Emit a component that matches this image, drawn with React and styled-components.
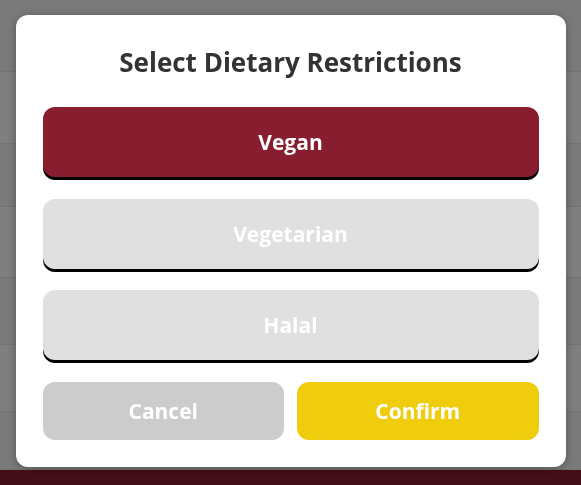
import React, { useState } from 'react';
import styled, { createGlobalStyle } from 'styled-components';

const options = ['Vegan', 'Vegetarian', 'Halal'];
const rows = [72, 72, 63, 71, 67, 67, 58];

const App = () => {
  const [picked, setPicked] = useState(['Vegan']);

  const toggle = (name) =>
    setPicked((p) => (p.includes(name) ? p.filter((n) => n !== name) : [...p, name]));

  return (
    <>
      <GlobalStyle />
      <Page>
        <List>
          {rows.map((h, i) => (
            <Row key={i} $h={h} $alt={i % 2 === 0} />
          ))}
        </List>
        <Footer />
      </Page>
      <Overlay>
        <Modal>
          <Title>Select Dietary Restrictions</Title>
          <Options>
            {options.map((name) => (
              <Option key={name} $active={picked.includes(name)} onClick={() => toggle(name)}>
                {name}
              </Option>
            ))}
          </Options>
          <Actions>
            <ActionButton $kind='cancel'>Cancel</ActionButton>
            <ActionButton $kind='confirm'>Confirm</ActionButton>
          </Actions>
        </Modal>
      </Overlay>
    </>
  );
};

const GlobalStyle = createGlobalStyle`
  * {
    box-sizing: border-box;
  }
  html, body {
    margin: 0;
    padding: 0;
    height: 100%;
    overflow: hidden;
    font-family: "Open Sans", "Noto Sans", sans-serif;
  }
`;

const Page = styled.div`
  height: 100vh;
  display: flex;
  flex-direction: column;
  background: #fff;
`;

const List = styled.div`
  flex: 1;
  display: flex;
  flex-direction: column;
`;

const Row = styled.div`
  height: ${({ $h }) => $h}px;
  background: ${({ $alt }) => ($alt ? '#f4f4f4' : '#ffffff')};
  border-bottom: 1px solid #e6e6e6;
`;

const Footer = styled.div`
  height: 15px;
  background: #881d30;
`;

const Overlay = styled.div`
  position: fixed;
  inset: 0;
  background: rgba(0, 0, 0, 0.5);
  display: flex;
  align-items: center;
  justify-content: center;
`;

const Modal = styled.div`
  width: 550px;
  height: 452px;
  margin-top: -3px;
  background: #fff;
  border-radius: 12px;
  box-shadow: 0 2px 10px rgba(0, 0, 0, 0.3);
  padding: 27px 27px 27px;
  display: flex;
  flex-direction: column;
`;

const Title = styled.h2`
  margin: 0;
  text-align: center;
  font-size: 26px;
  font-weight: 700;
  color: #333;
  line-height: 40px;
`;

const Options = styled.div`
  margin-top: 25px;
  display: flex;
  flex-direction: column;
  gap: 21.5px;
`;

const Option = styled.button`
  height: 70px;
  border: none;
  border-radius: 12px;
  box-shadow: 0 3px 0 #000;
  background: ${({ $active }) => ($active ? '#881d30' : '#e0e0e0')};
  color: #fff;
  font-family: inherit;
  font-size: 21px;
  font-weight: 700;
  cursor: pointer;
`;

const Actions = styled.div`
  margin-top: auto;
  display: grid;
  grid-template-columns: 1fr 1fr;
  gap: 13px;
`;

const ActionButton = styled.button`
  height: 58px;
  border: none;
  border-radius: 12px;
  background: ${({ $kind }) => ($kind === 'confirm' ? '#efcc0c' : '#cccccc')};
  color: #fff;
  font-family: inherit;
  font-size: 21px;
  font-weight: 700;
  cursor: pointer;
`;

export default App;
